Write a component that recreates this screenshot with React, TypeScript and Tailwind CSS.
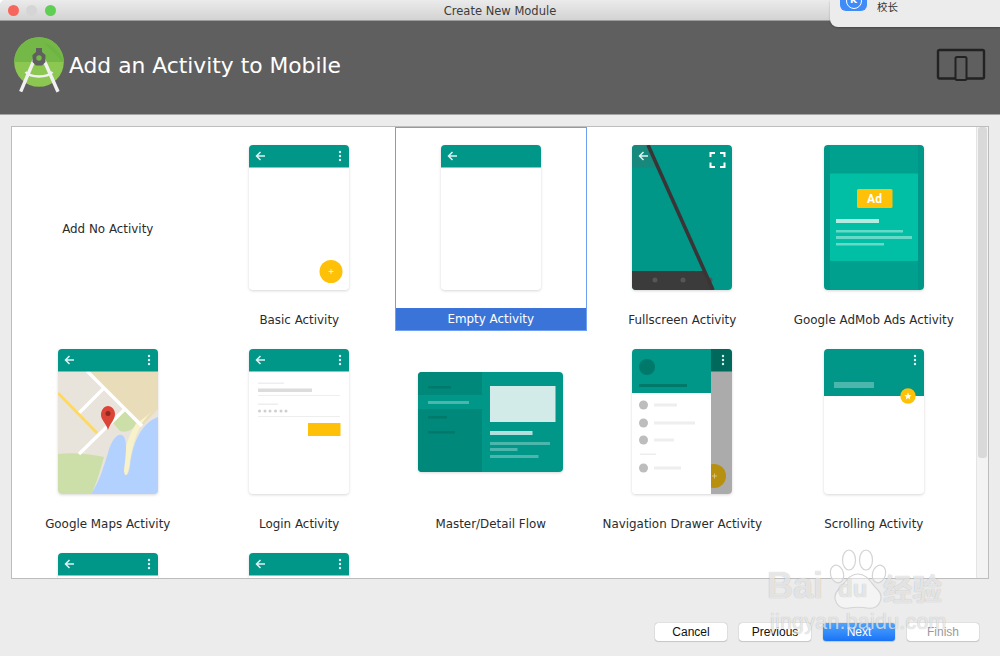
const TEAL = '#009688';

function Bar({ dots = true, back = true }: { dots?: boolean; back?: boolean }) {
  return (
    <>
      <rect x="0" y="0" width="100" height="22.5" fill={TEAL} />
      {back && (
        <path d="M16 11H8M11.5 7L7.5 11L11.5 15" fill="none" stroke="#e0f2f1" strokeWidth="1.5" />
      )}
      {dots && <Dots />}
    </>
  );
}

function Dots() {
  return (
    <g fill="#e0f2f1">
      <circle cx="91" cy="7" r="1.2" />
      <circle cx="91" cy="11" r="1.2" />
      <circle cx="91" cy="15" r="1.2" />
    </g>
  );
}

function Phone({ children }: { children: React.ReactNode }) {
  return (
    <div className="h-[145px] w-[100px] shrink-0 overflow-hidden rounded-[4px] bg-white shadow-[0_1px_3px_rgba(0,0,0,0.16)]">
      <svg viewBox="0 0 100 145" className="block h-[145px] w-[100px]">
        {children}
      </svg>
    </div>
  );
}

function Basic() {
  return (
    <Phone>
      <Bar />
      <circle cx="82" cy="126.5" r="11.5" fill="#ffc107" />
      <path d="M79.500 126.500h5M82 124v5" stroke="#fff3c4" strokeWidth="1" />
    </Phone>
  );
}

function Empty() {
  return (
    <Phone>
      <Bar dots={false} />
    </Phone>
  );
}

function Fullscreen() {
  return (
    <Phone>
      <rect width="100" height="145" fill={TEAL} />
      <path d="M0 0H16L27 22.5H0Z" fill="#16887c" />
      <path d="M16 11H8M11.5 7L7.5 11L11.5 15" fill="none" stroke="#e0f2f1" strokeWidth="1.5" />
      <path d="M0 126H72L81 145H0Z" fill="#3b3b3b" />
      <g fill="#565656">
        <circle cx="23" cy="135" r="2.5" />
        <circle cx="51" cy="135" r="2.5" />
        <circle cx="78" cy="135" r="2.5" />
      </g>
      <path d="M16 0L81 145" stroke="#3b3436" strokeWidth="3.6" />
      <path
        d="M78.500 12V8H83M88 8H92.500V12M92.500 17.500V22H88M83 22H78.500V17.500"
        fill="none"
        stroke="#fff"
        strokeWidth="2"
      />
    </Phone>
  );
}

function AdMob() {
  return (
    <Phone>
      <rect width="100" height="145" fill="#009688" />
      <rect x="6" width="88" height="145" fill="#00a08e" />
      <rect x="6" y="28.500" width="88" height="87.500" rx="1" fill="#00bfa5" />
      <rect x="33" y="44" width="35.500" height="19" rx="1.500" fill="#ffc107" />
      <text x="50.500" y="58" textAnchor="middle" fontSize="12" fontWeight="700" fill="#fff" fontFamily="Roboto, sans-serif">
        Ad
      </text>
      <rect x="12" y="74" width="43" height="4" fill="#b2ebe0" />
      <rect x="12" y="85" width="67" height="2.500" fill="#66d9c9" />
      <rect x="12" y="91" width="76" height="3" fill="#66d9c9" />
      <rect x="12" y="98" width="48" height="2.500" fill="#66d9c9" />
    </Phone>
  );
}

function Maps() {
  return (
    <Phone>
      <rect y="22" width="100" height="123" fill="#e8e4dc" />
      <path d="M29 22H100V60L84 77Z" fill="#e8ddb8" />
      <path d="M55 74L67 62L78 74C76 82 66 84 62 82Z" fill="#cddfa8" />
      <path d="M0 105C14 103 32 105 46 108C42 122 38 136 33 145H4C1 145 0 143 0 141Z" fill="#cddfa8" />
      <path d="M100 58C84 68 76 86 72 112C70 128 66 130 65 122C65 108 68 90 78 75Z" fill="#f8f2c8" />
      <path
        d="M33 145C42 132 46 116 50 104C54 88 62 82 66 88C70 94 67 112 66 122C67 130 71 126 72 116C75 92 84 74 100 68V145Z"
        fill="#b3d1ff"
      />
      <g stroke="#fff" strokeWidth="3.200" fill="none">
        <path d="M29 22L84 77" />
        <path d="M45 40L21 64" />
        <path d="M66 61L21 105" />
      </g>
      <path d="M0 44L39 84" stroke="#ffd95e" strokeWidth="2.800" />
      <path d="M43 66C43 61 46 57 50 57C54 57 57 61 57 65C57 71 52 74 50 81C48 74 43 71 43 66Z" fill="#db4437" />
      <circle cx="50" cy="64.500" r="2.500" fill="#8e2a1f" />
      <Bar />
    </Phone>
  );
}

function Login() {
  return (
    <Phone>
      <Bar />
      <rect x="9" y="33.500" width="26" height="1.500" fill="#eeeeee" />
      <rect x="9" y="39.500" width="54" height="3.500" fill="#dcdcdc" />
      <rect x="9" y="46" width="82" height="1" fill="#eeeeee" />
      <rect x="9" y="54.500" width="20" height="1.500" fill="#eeeeee" />
      <g fill="#cfcfcf">
        <circle cx="10.500" cy="62" r="1.500" />
        <circle cx="16" cy="62" r="1.500" />
        <circle cx="21" cy="62" r="1.500" />
        <circle cx="26.500" cy="62" r="1.500" />
        <circle cx="32" cy="62" r="1.500" />
        <circle cx="37" cy="62" r="1.500" />
      </g>
      <rect x="9" y="67" width="82" height="1" fill="#eeeeee" />
      <rect x="59" y="74" width="32.500" height="13" fill="#ffc107" />
    </Phone>
  );
}

function MasterDetail() {
  return (
    <div className="h-[100px] w-[145px] shrink-0 overflow-hidden rounded-[4px] shadow-[0_1px_3px_rgba(0,0,0,0.16)]">
      <svg viewBox="0 0 145 100" className="block h-[100px] w-[145px]">
        <rect width="145" height="100" fill={TEAL} />
        <rect width="64" height="100" fill="#00897b" />
        <rect y="23" width="64" height="14" fill={TEAL} />
        <g fill="#00796b">
          <rect x="10" y="14" width="23" height="2.500" />
          <rect x="10" y="44" width="19" height="2.500" />
          <rect x="10" y="59" width="27" height="2.500" />
        </g>
        <rect x="10" y="29" width="41" height="3" fill="#4db6ac" />
        <rect x="72" y="14" width="65.500" height="36" fill="#d2ebe9" />
        <rect x="72" y="59" width="42.500" height="4" fill="#b2dfdb" />
        <g fill="#4db6ac">
          <rect x="72" y="70" width="60" height="3" />
          <rect x="72" y="76" width="27.500" height="3" />
          <rect x="72" y="83" width="48.500" height="3" />
        </g>
      </svg>
    </div>
  );
}

function NavDrawer() {
  return (
    <Phone>
      <rect x="79" width="21" height="145" fill="#ababab" />
      <rect x="79" width="21" height="22.500" fill="#00695c" />
      <Dots />
      <circle cx="82" cy="127" r="12" fill="#b8900f" />
      <path d="M80 127h5M82.500 124.500v5" stroke="#d8c27a" strokeWidth="1" />
      <rect width="79" height="145" fill="#fff" />
      <rect width="79" height="44" fill={TEAL} />
      <circle cx="15" cy="18" r="8" fill="#00796b" />
      <rect x="7" y="35" width="48" height="3" fill="#00796b" />
      <g fill="#bdbdbd">
        <circle cx="11.500" cy="56" r="4.500" />
        <circle cx="11.500" cy="74" r="4.500" />
        <circle cx="11.500" cy="91" r="4.500" />
        <circle cx="11.500" cy="119" r="4.500" />
      </g>
      <g fill="#eeeeee">
        <rect x="22" y="54.500" width="23" height="3" />
        <rect x="22" y="72.500" width="41" height="3" />
        <rect x="22" y="89.500" width="20" height="3" />
        <rect x="8" y="104.500" width="16" height="1.500" />
        <rect x="22" y="117.500" width="27" height="3" />
      </g>
    </Phone>
  );
}

function Scrolling() {
  return (
    <Phone>
      <rect width="100" height="47" fill={TEAL} />
      <Dots />
      <rect x="10" y="33" width="40" height="6" fill="#4db6ac" />
      <circle cx="84" cy="47" r="7.700" fill="#ffc107" />
      <path d="M84 43.500L85 46L87.600 46.200L85.600 47.900L86.200 50.500L84 49.100L81.800 50.500L82.400 47.900L80.400 46.200L83 46Z" fill="#fff" />
    </Phone>
  );
}

const cells: { label: string; art?: React.ReactNode; selected?: boolean }[] = [
  { label: 'Add No Activity' },
  { label: 'Basic Activity', art: <Basic /> },
  { label: 'Empty Activity', art: <Empty />, selected: true },
  { label: 'Fullscreen Activity', art: <Fullscreen /> },
  { label: 'Google AdMob Ads Activity', art: <AdMob /> },
  { label: 'Google Maps Activity', art: <Maps /> },
  { label: 'Login Activity', art: <Login /> },
  { label: 'Master/Detail Flow', art: <MasterDetail /> },
  { label: 'Navigation Drawer Activity', art: <NavDrawer /> },
  { label: 'Scrolling Activity', art: <Scrolling /> },
  { label: '', art: <Basic /> },
  { label: '', art: <Basic /> },
];

function Cell({ label, art, selected }: { label: string; art?: React.ReactNode; selected?: boolean }) {
  if (!art) {
    return (
      <div className="flex h-[204px] items-center justify-center pt-[2px] text-[11.900px] text-[#2b2b2b]">
        {label}
      </div>
    );
  }
  return (
    <div
      className={
        selected
          ? 'flex h-[204px] flex-col items-center border border-[#6f9ff0] pt-[17px]'
          : 'flex h-[204px] flex-col items-center pt-[18px]'
      }
    >
      <div className="flex h-[145px] items-center">{art}</div>
      <div
        className={
          selected
            ? 'mt-auto flex h-[22px] w-full items-center justify-center bg-[#3b74d9] pt-[2px] text-[11.900px] text-white'
            : 'mt-auto flex h-[23px] w-full items-center justify-center pt-[3px] text-[11.900px] text-[#2b2b2b]'
        }
      >
        {label}
      </div>
    </div>
  );
}

function Logo() {
  return (
    <svg viewBox="0 0 50 58" className="h-[58px] w-[50px] shrink-0">
      <circle cx="25" cy="25" r="24.800" fill="#8bc751" />
      <path d="M0.200 25A24.800 24.800 0 0 1 49.800 25Z" fill="#74b947" />
      <path d="M30 6L49 25A24.800 24.800 0 0 0 30 6Z" fill="#6bb03f" opacity="0.6" />
      <path d="M20.500 22L6.700 54.700" stroke="#f1f1f1" strokeWidth="3.400" />
      <path d="M29.500 22L44 54.700" stroke="#f1f1f1" strokeWidth="3.400" />
      <path d="M11.500 35C17 41 33 41 38.500 35" fill="none" stroke="#f1f1f1" strokeWidth="2.400" />
      <path d="M22 11H28V15L31.500 18V25L28 28.500H22L18.500 25V18L22 15Z" fill="#5f5f5f" />
      <circle cx="25" cy="21" r="2.700" fill="#74b947" />
    </svg>
  );
}

function Paw() {
  return (
    <svg viewBox="0 0 90 72" className="h-[72px] w-[90px]">
      <g fill="#ffffff" fillOpacity="0.45" stroke="#d4d4d4" strokeWidth="1.200">
        <ellipse cx="20" cy="12" rx="6.500" ry="10" />
        <ellipse cx="37" cy="12" rx="6.500" ry="10" />
        <ellipse cx="8" cy="26" rx="6.500" ry="9" transform="rotate(-15 8 26)" />
        <ellipse cx="50" cy="26" rx="6.500" ry="9" transform="rotate(15 50 26)" />
        <path d="M29 26C39 26 42 36 49 42C56 50 50 62 38 60C32 59 26 59 20 60C8 62 2 50 9 42C16 36 19 26 29 26Z" />
      </g>
    </svg>
  );
}

function Watermark() {
  return (
    <div className="pointer-events-none absolute left-[767px] top-[548px] h-[90px] w-[180px] font-['Liberation_Sans',sans-serif] text-white/70 [text-shadow:0_0_1px_rgba(0,0,0,0.3)]">
      <div className="absolute left-[62px] top-0">
        <Paw />
      </div>
      <span className="absolute left-0 top-[18px] text-[36px] font-bold leading-[40px]">Bai</span>
      <span className="absolute left-[71px] top-[27px] text-[24px] font-bold leading-[28px]">du</span>
      <span className="absolute left-[116px] top-[22px] font-['Noto_Sans_CJK_SC',sans-serif] text-[29.500px] font-bold leading-[34px]">
        经验
      </span>
      <span className="absolute left-[3px] top-[61px] text-[21.500px] leading-[26px] tracking-[0.2px]">jingyan.baidu.com</span>
    </div>
  );
}

function Btn({ children, kind }: { children: React.ReactNode; kind?: 'primary' | 'off' }) {
  let cls = 'bg-white text-[#111]';
  if (kind === 'primary') cls = 'bg-gradient-to-b from-[#4ea5ff] to-[#1a73f5] text-white';
  if (kind === 'off') cls = 'bg-white text-[#9a9a9a]';
  return (
    <div
      className={`flex h-[18px] w-[72px] items-center justify-center rounded-[3px] text-[12px] shadow-[0_0_1px_rgba(0,0,0,0.45),0_1px_1px_rgba(0,0,0,0.12)] ${cls}`}
    >
      {children}
    </div>
  );
}

export default function App() {
  return (
    <div className="relative h-[656px] w-[1000px] overflow-hidden bg-white font-['DejaVu_Sans',sans-serif]">
      <div className="flex h-full flex-col overflow-hidden rounded-t-[5px] bg-[#ececec]">
        <div className="relative flex h-[21px] shrink-0 items-center justify-center border-b border-[#9c9c9c] bg-gradient-to-b from-[#ebebeb] to-[#d3d3d3] pt-[3px] text-[11.500px] text-[#3c3c3c]">
          <div className="absolute left-[7.500px] top-[4.500px] flex gap-[7.500px]">
            <span className="h-[11px] w-[11px] rounded-full bg-[#f5675d]" />
            <span className="h-[11px] w-[11px] rounded-full bg-[#d5d5d5]" />
            <span className="h-[11px] w-[11px] rounded-full bg-[#5fcf54]" />
          </div>
          Create New Module
        </div>

        <div className="flex h-[94px] shrink-0 border-b border-[#a5a5a5] bg-[#5f5f5f] pl-[14px] pr-[14px]">
          <div className="pt-[16px]">
            <Logo />
          </div>
          <div className="ml-[5px] pt-[30px] text-[21.800px] leading-[30px] text-white">
            Add an Activity to Mobile
          </div>
          <div className="ml-auto pt-[27px]">
            <svg viewBox="0 0 50 34" className="h-[34px] w-[50px]">
              <rect x="2" y="2" width="46" height="28.500" rx="1.500" fill="none" stroke="#222" strokeWidth="2.400" />
              <rect x="19.500" y="9" width="11" height="23" rx="1.500" fill="#5f5f5f" stroke="#222" strokeWidth="2" />
            </svg>
          </div>
        </div>

        <div className="px-[11px] pt-[11px]">
          <div className="flex h-[453px] w-[978px] overflow-hidden border border-[#bdbdbd] bg-white">
            <div className="w-[965px] overflow-hidden">
              <div className="grid grid-cols-[repeat(5,191.5px)]">
                {cells.map((c, i) => (
                  <Cell key={i} label={c.label} art={c.art} selected={c.selected} />
                ))}
              </div>
            </div>
            <div className="flex-1 border-l border-[#e4e4e4] bg-[#f3f3f3] pl-[1px] pr-[1px]">
              <div className="h-[331px] w-[9px] rounded-[3px] bg-[#d9d9d9]" />
            </div>
          </div>
        </div>

        <div className="mt-[44px] flex justify-end gap-[12px] pr-[21px] font-['Liberation_Sans',sans-serif]">
          <Btn>Cancel</Btn>
          <Btn>Previous</Btn>
          <Btn kind="primary">Next</Btn>
          <Btn kind="off">Finish</Btn>
        </div>
      </div>

      <div className="absolute right-0 top-0 flex h-[27px] w-[170px] items-start rounded-bl-[8px] bg-[#ececec] pl-[10px] shadow-[0_1px_2px_rgba(0,0,0,0.25)]">
        <div className="-mt-[16px] flex h-[27px] w-[27px] items-end justify-center rounded-[6px] bg-[#3f8bf7] pb-[2px]">
          <span className="flex h-[16px] w-[16px] items-center justify-center rounded-full border border-white text-[9px] font-bold text-white">
            K
          </span>
        </div>
        <span className="ml-[10px] font-['Noto_Sans_CJK_SC',sans-serif] text-[10.500px] leading-[13px] text-[#333]">
          校长
        </span>
      </div>

      <Watermark />
    </div>
  );
}
